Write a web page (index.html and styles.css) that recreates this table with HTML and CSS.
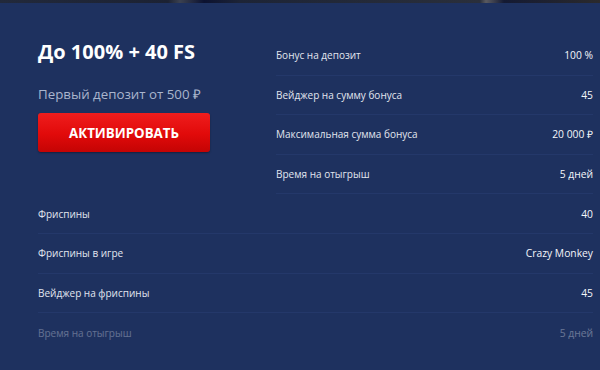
FILE: index.html
```html
<!DOCTYPE html>
<html lang="ru">
<head>
<meta charset="utf-8">
<link rel="stylesheet" href="styles.css">
</head>
<body>
<div class="strip"></div>
<div class="card">
  <div class="top">
    <div class="offer">
      <div class="title">До 100% + 40 FS</div>
      <div class="sub">Первый депозит от 500 ₽</div>
      <button class="btn">АКТИВИРОВАТЬ</button>
    </div>
    <div class="list">
      <div class="row"><span>Бонус на депозит</span><span class="val">100 %</span></div>
      <div class="row"><span>Вейджер на сумму бонуса</span><span class="val">45</span></div>
      <div class="row"><span>Максимальная сумма бонуса</span><span class="val">20 000 ₽</span></div>
      <div class="row"><span>Время на отыгрыш</span><span class="val">5 дней</span></div>
    </div>
  </div>
  <div class="list">
    <div class="row"><span>Фриспины</span><span class="val">40</span></div>
    <div class="row"><span>Фриспины в игре</span><span class="val">Crazy Monkey</span></div>
    <div class="row"><span>Вейджер на фриспины</span><span class="val">45</span></div>
    <div class="row faded"><span>Время на отыгрыш</span><span class="val">5 дней</span></div>
  </div>
</div>
</body>
</html>
```
FILE: styles.css
```css
html, body {
  margin: 0;
  padding: 0;
  background: #1e315f;
  width: 600px;
  height: 370px;
  overflow: hidden;
  font-family: "Open Sans", "Liberation Sans", sans-serif;
  color: #e6e9f1;
}
.strip {
  height: 3px;
  background: linear-gradient(90deg, #22293b 0%, #1c2233 28%, #3b4150 30%, #0c1230 34%, #1d2436 40%, #2a2f3b 80%, #5a5a60 81%, #141a33 84%, #2b2a2c 100%);
}
.card {
  padding: 0 7px 0 38px;
}
.top {
  display: grid;
  grid-template-columns: 238px 1fr;
  padding-top: 33px;
}
.offer {
  display: flex;
  flex-direction: column;
}
.title {
  font-size: 20px;
  font-weight: 700;
  color: #ffffff;
  line-height: 28px;
  margin-top: 2px;
}
.sub {
  font-size: 13.3px;
  color: #aab5cd;
  margin-top: 18px;
  line-height: 20px;
}
.btn {
  margin-top: 9px;
  width: 172px;
  height: 39px;
  border: none;
  border-radius: 3px;
  background: linear-gradient(180deg, #ef1d1d 0%, #e10a0a 55%, #c40404 100%);
  box-shadow: 0 1px 2px rgba(0,0,0,0.35);
  color: #fff;
  font-family: "Open Sans", "Liberation Sans", sans-serif;
  font-weight: 700;
  font-size: 13.3px;
  padding: 0;
}
.list {
  display: flex;
  flex-direction: column;
}
.row {
  height: 39.6px;
  box-sizing: border-box;
  border-bottom: 1px solid #24386a;
  display: flex;
  justify-content: space-between;
  align-items: center;
  font-size: 10px;
  color: #e2e6ef;
}
.val {
  font-size: 10.3px;
  font-weight: 500;
  color: #f4f6fa;
}
.faded {
  opacity: 0.35;
  border-bottom: none;
}
```
